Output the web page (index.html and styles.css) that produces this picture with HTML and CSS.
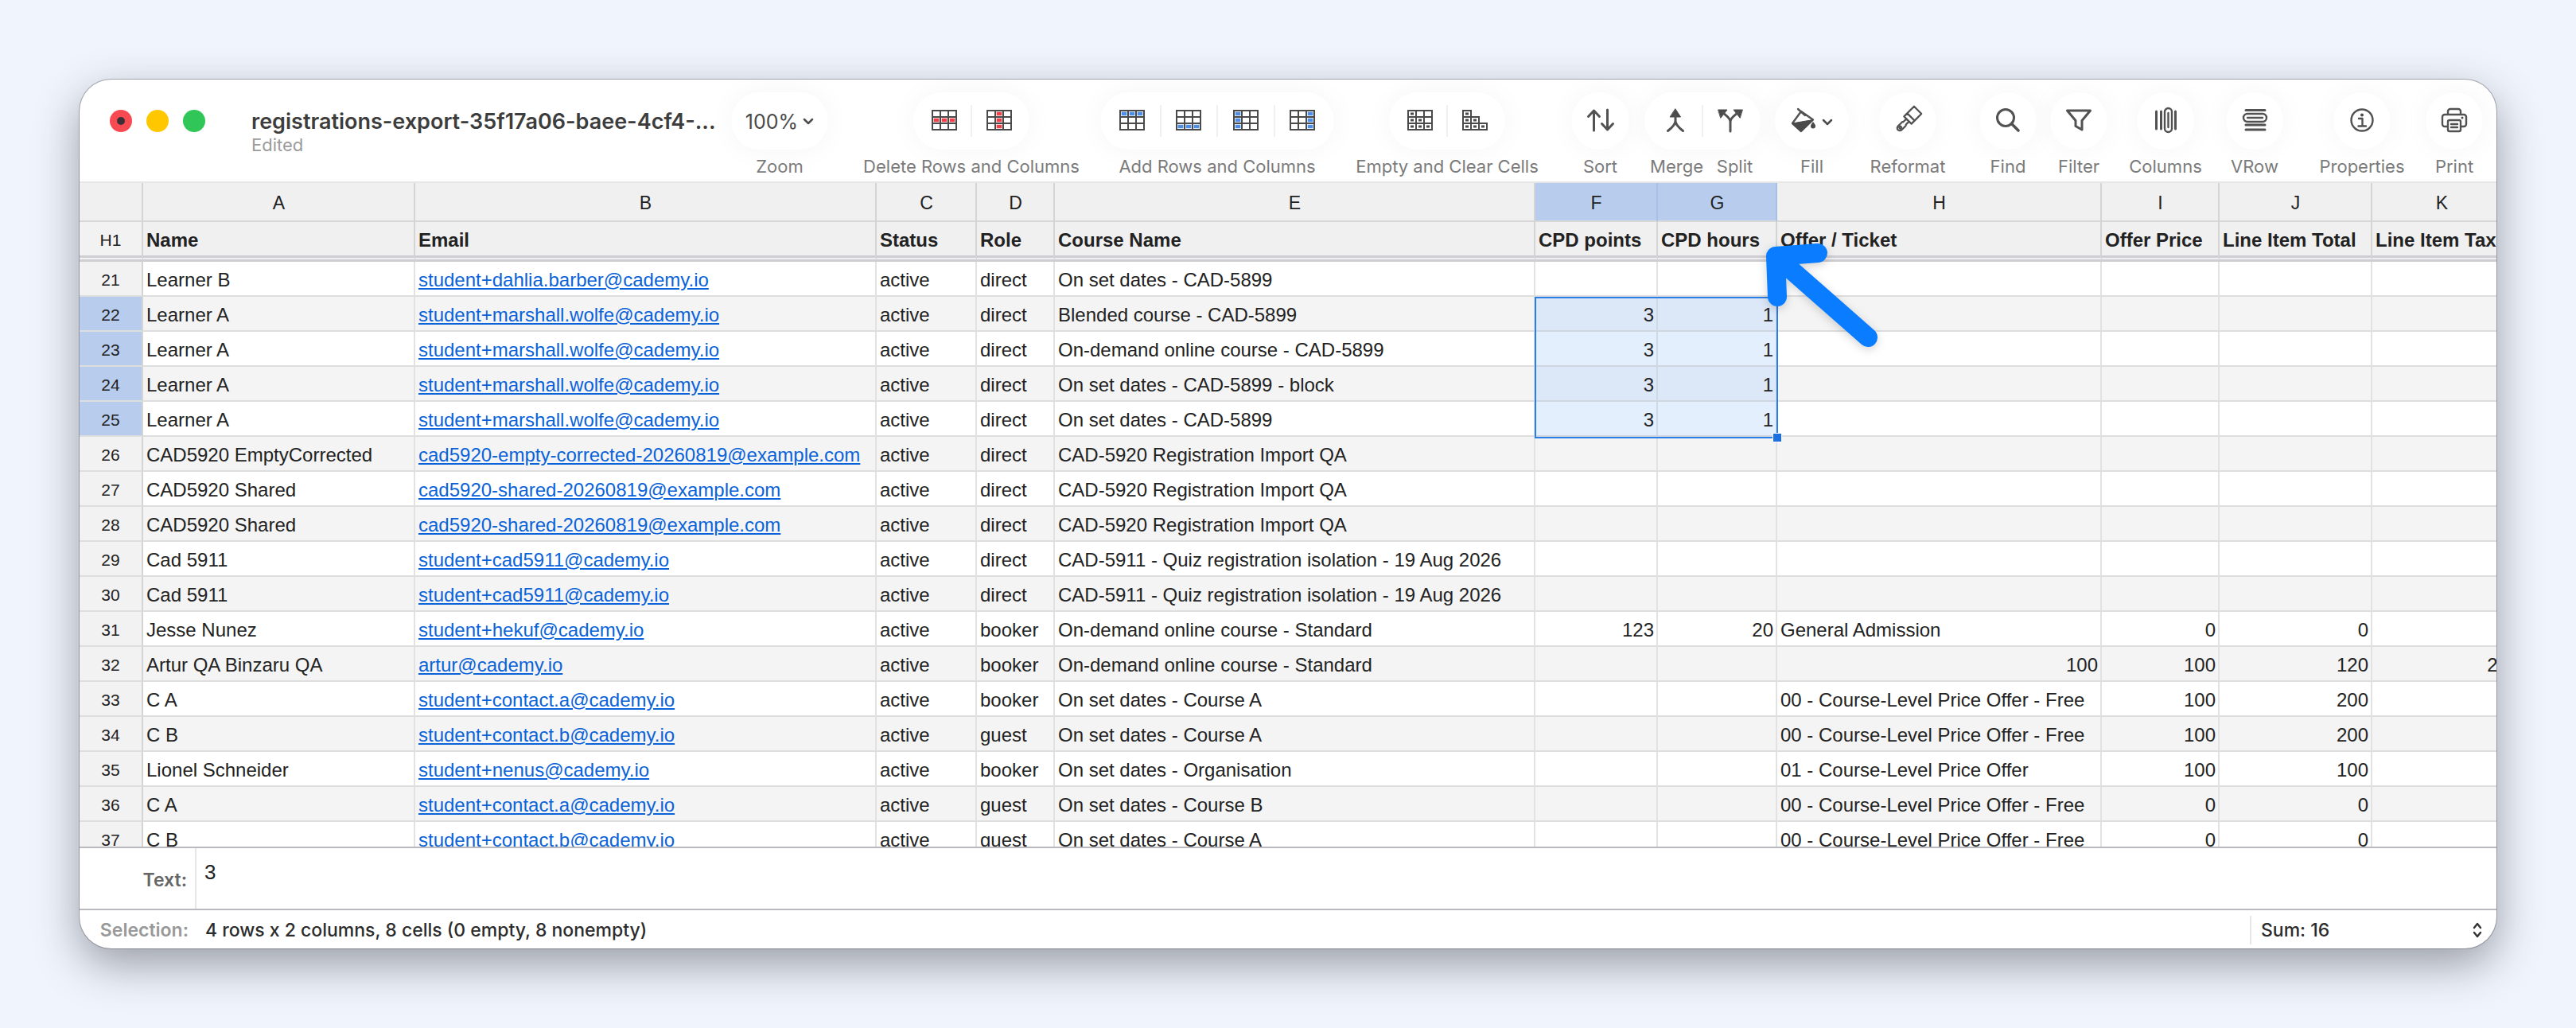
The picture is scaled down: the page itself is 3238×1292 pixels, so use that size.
FILE: index.html
```html
<!DOCTYPE html>
<html lang="en">
<head>
    <meta charset="UTF-8">
    <title>registrations-export</title>
    <link rel="stylesheet" href="styles.css">
</head>
<body>
    <svg class="icon-defs" width="0" height="0">
        <symbol id="grid" viewBox="0 0 32 26">
            <path fill="#4a4a4a" d="M0 0h32v26H0z"/>
            <path fill="#fff" d="M2 2h8v6H2zM12 2h8v6h-8zM22 2h8v6h-8zM2 10h8v6H2zM12 10h8v6h-8zM22 10h8v6h-8zM2 18h8v6H2zM12 18h8v6h-8zM22 18h8v6h-8z"/>
        </symbol>
    </svg>

    <div class="window">
        <header class="toolbar">
            <div class="traffic">
                <span class="light light-red"></span>
                <span class="light light-yellow"></span>
                <span class="light light-green"></span>
            </div>
            <div class="doc-title">
                <div class="doc-name">registrations-export-35f17a06-baee-4cf4-...</div>
                <div class="doc-state">Edited</div>
            </div>

            <div class="tool tool-zoom">
                <div class="pill"><span class="zoom-value">100%</span>
                    <svg class="chev" viewBox="0 0 14 9"><path d="M2 2l5 5 5-5"/></svg>
                </div>
                <span class="tool-label">Zoom</span>
            </div>

            <div class="tool tool-delete">
                <div class="pill">
                    <span class="seg"><svg class="grid-icon" viewBox="0 0 32 26"><use href="#grid"/><path class="red" d="M2.7 10.7h6.6v4.6H2.7zM12.7 10.7h6.6v4.6h-6.6zM22.7 10.7h6.6v4.6h-6.6z"/></svg></span>
                    <span class="sep"></span>
                    <span class="seg"><svg class="grid-icon" viewBox="0 0 32 26"><use href="#grid"/><path class="red" d="M12.7 2.7h6.6v4.6h-6.6zM12.7 10.7h6.6v4.6h-6.6zM12.7 18.7h6.6v4.6h-6.6z"/></svg></span>
                </div>
                <span class="tool-label">Delete Rows and Columns</span>
            </div>

            <div class="tool tool-add">
                <div class="pill">
                    <span class="seg"><svg class="grid-icon" viewBox="0 0 32 26"><use href="#grid"/><path class="blue" d="M2.7 2.7h6.6v4.6H2.7zM12.7 2.7h6.6v4.6h-6.6zM22.7 2.7h6.6v4.6h-6.6z"/></svg></span>
                    <span class="sep"></span>
                    <span class="seg"><svg class="grid-icon" viewBox="0 0 32 26"><use href="#grid"/><path class="blue" d="M2.7 18.7h6.6v4.6H2.7zM12.7 18.7h6.6v4.6h-6.6zM22.7 18.7h6.6v4.6h-6.6z"/></svg></span>
                    <span class="sep"></span>
                    <span class="seg"><svg class="grid-icon" viewBox="0 0 32 26"><use href="#grid"/><path class="blue" d="M2.7 2.7h6.6v4.6H2.7zM2.7 10.7h6.6v4.6H2.7zM2.7 18.7h6.6v4.6H2.7z"/></svg></span>
                    <span class="sep"></span>
                    <span class="seg"><svg class="grid-icon" viewBox="0 0 32 26"><use href="#grid"/><path class="blue" d="M22.7 2.7h6.6v4.6h-6.6zM22.7 10.7h6.6v4.6h-6.6zM22.7 18.7h6.6v4.6h-6.6z"/></svg></span>
                </div>
                <span class="tool-label">Add Rows and Columns</span>
            </div>

            <div class="tool tool-empty">
                <div class="pill">
                    <span class="seg"><svg class="grid-icon" viewBox="0 0 32 26"><use href="#grid"/><path class="dark" d="M4 3.5h4v3H4zM4 11.5h4v3H4zM14 11.5h4v3h-4zM4 19.5h4v3H4zM14 19.5h4v3h-4zM24 19.5h4v3h-4z"/></svg></span>
                    <span class="sep"></span>
                    <span class="seg"><svg class="grid-icon" viewBox="0 0 32 26"><path fill="#4a4a4a" d="M0 0h12v8h10v8h10v10H0z"/><path fill="#fff" d="M2 2h8v6H2zM2 10h8v6H2zM12 10h8v6h-8zM2 18h8v6H2zM12 18h8v6h-8zM22 18h8v6h-8z"/><path class="dark" d="M4 3.5h4v3H4zM4 11.5h4v3H4zM14 11.5h4v3h-4zM4 19.5h4v3H4zM14 19.5h4v3h-4zM24 19.5h4v3h-4z"/></svg></span>
                </div>
                <span class="tool-label">Empty and Clear Cells</span>
            </div>

            <div class="tool tool-sort">
                <div class="pill"><svg class="ico ico-sort" viewBox="0 0 34 28"><path d="M8.500 27V2M1.500 9.500l7-7.500 7 7.500M25.500 1v25M18.500 18.500l7 7.500 7-7.500"/></svg></div>
                <span class="tool-label">Sort</span>
            </div>

            <div class="tool tool-merge">
                <div class="pill">
                    <span class="seg"><svg class="ico ico-merge" viewBox="0 0 22 29"><path class="solid" d="M11 0l6.500 10h-13z"/><path d="M11 8v7c0 5-5 9-9.500 12.500M11 15c0 5 5 9 9.500 12.500"/></svg></span>
                    <span class="sep"></span>
                    <span class="seg"><svg class="ico ico-split" viewBox="0 0 30 28"><path class="solid" d="M0 1h11L3 11zM30 1H19l8 10z"/><path d="M15 28V16c0-5-6-8-10-12M15 16c0-5 6-8 10-12"/></svg></span>
                </div>
                <div class="label-pair"><span class="tool-label">Merge</span><span class="tool-label">Split</span></div>
            </div>

            <div class="tool tool-fill">
                <div class="pill">
                    <svg class="ico ico-bucket" viewBox="0 0 30 30"><path d="M8 1l9 8"/><path d="M12 4l15 10.500L12 29 1 19z"/><path class="solid" d="M1 19l26-4.500L12 29z"/><path class="solid bare" d="M27 17c2 2.500 3 4 3 5.500a3 3 0 0 1-6 0c0-1.500 1-3 3-5.500z"/></svg>
                    <svg class="chev chev-fill" viewBox="0 0 14 9"><path d="M2 2l5 5 5-5"/></svg>
                </div>
                <span class="tool-label">Fill</span>
            </div>

            <div class="tool tool-reformat">
                <div class="pill">
                    <svg class="ico ico-brush" viewBox="0 0 32 34"><g transform="rotate(45 16 17)"><path class="thin" d="M9-2h14v13H9zM9 11h14v6H9zM13.500 17h5v6a2 2 0 0 1 1 2v7a3.500 3.500 0 0 1-7 0v-7a2 2 0 0 1 1-2z"/><circle class="thin" cx="16" cy="31" r="1.500"/></g></svg>
                </div>
                <span class="tool-label">Reformat</span>
            </div>

            <div class="tool tool-find">
                <div class="pill"><svg class="ico ico-find" viewBox="0 0 30 30"><circle cx="12" cy="12" r="10.500"/><path class="heavy" d="M19.500 19.500L28 28"/></svg></div>
                <span class="tool-label">Find</span>
            </div>

            <div class="tool tool-filter">
                <div class="pill"><svg class="ico ico-filter" viewBox="0 0 32 28"><path d="M1.500 2h29L20 14.500V26l-8-4.500v-7z"/></svg></div>
                <span class="tool-label">Filter</span>
            </div>

            <div class="tool tool-columns">
                <div class="pill"><svg class="ico ico-columns" viewBox="0 0 27 32"><path d="M1.500 5v22M7.500 5v22M25.500 5v22"/><rect class="thin" x="12" y="1" width="9" height="30" rx="4.500"/><path class="thin" d="M16.500 7v18"/></svg></div>
                <span class="tool-label">Columns</span>
            </div>

            <div class="tool tool-vrow">
                <div class="pill"><svg class="ico ico-vrow" viewBox="0 0 31 28"><path d="M4 1.500h24M4 20h24M4 26h24"/><rect class="thin" x="1" y="6" width="29" height="10" rx="5"/><path class="thin" d="M6 11h19"/></svg></div>
                <span class="tool-label">VRow</span>
            </div>

            <div class="tool tool-properties">
                <div class="pill"><svg class="ico ico-info" viewBox="0 0 30 30"><circle class="thin" cx="15" cy="15" r="13.500"/><circle class="solid bare" cx="15" cy="8.500" r="2"/><path class="thin" d="M11 13h4.500v9M10.500 22.500h9.500"/></svg></div>
                <span class="tool-label">Properties</span>
            </div>

            <div class="tool tool-print">
                <div class="pill"><svg class="ico ico-print" viewBox="0 0 32 30"><path class="thin" d="M8 8V4a3 3 0 0 1 3-3h10a3 3 0 0 1 3 3v4M7 23H4a3 3 0 0 1-3-3v-9a3 3 0 0 1 3-3h24a3 3 0 0 1 3 3v9a3 3 0 0 1-3 3h-3"/><rect class="thin" x="8" y="15" width="16" height="14" rx="2"/><path class="thin" d="M12 20h8M12 24h8"/><circle class="solid bare" cx="26" cy="12" r="1.500"/></svg></div>
                <span class="tool-label">Print</span>
            </div>
        </header>

        <div class="sheet">
            <table class="grid">
                <colgroup>
                    <col class="col-gutter"><col class="col-a"><col class="col-b"><col class="col-c"><col class="col-d"><col class="col-e"><col class="col-f"><col class="col-g"><col class="col-h"><col class="col-i"><col class="col-j"><col class="col-k">
                </colgroup>
                <thead>
                    <tr class="letters">
                        <th></th><th>A</th><th>B</th><th>C</th><th>D</th><th>E</th><th class="hot">F</th><th class="hot">G</th><th>H</th><th>I</th><th>J</th><th>K</th>
                    </tr>
                    <tr class="names">
                        <th class="num">H1</th><th>Name</th><th>Email</th><th>Status</th><th>Role</th><th>Course Name</th><th>CPD points</th><th>CPD hours</th><th>Offer / Ticket</th><th>Offer Price</th><th>Line Item Total</th><th>Line Item Tax</th>
                    </tr>
                </thead>
                <tbody>
                    <tr><th class="num">21</th><td>Learner B</td><td><a href="#">student+dahlia.barber@cademy.io</a></td><td>active</td><td>direct</td><td>On set dates - CAD-5899</td><td></td><td></td><td></td><td></td><td></td><td></td></tr>
                    <tr class="picked"><th class="num">22</th><td>Learner A</td><td><a href="#">student+marshall.wolfe@cademy.io</a></td><td>active</td><td>direct</td><td>Blended course - CAD-5899</td><td class="sel r">3</td><td class="sel r">1</td><td></td><td></td><td></td><td></td></tr>
                    <tr class="picked"><th class="num">23</th><td>Learner A</td><td><a href="#">student+marshall.wolfe@cademy.io</a></td><td>active</td><td>direct</td><td>On-demand online course - CAD-5899</td><td class="sel r">3</td><td class="sel r">1</td><td></td><td></td><td></td><td></td></tr>
                    <tr class="picked"><th class="num">24</th><td>Learner A</td><td><a href="#">student+marshall.wolfe@cademy.io</a></td><td>active</td><td>direct</td><td>On set dates - CAD-5899 - block</td><td class="sel r">3</td><td class="sel r">1</td><td></td><td></td><td></td><td></td></tr>
                    <tr class="picked"><th class="num">25</th><td>Learner A</td><td><a href="#">student+marshall.wolfe@cademy.io</a></td><td>active</td><td>direct</td><td>On set dates - CAD-5899</td><td class="sel r">3</td><td class="sel r">1</td><td></td><td></td><td></td><td></td></tr>
                    <tr><th class="num">26</th><td>CAD5920 EmptyCorrected</td><td><a href="#">cad5920-empty-corrected-20260819@example.com</a></td><td>active</td><td>direct</td><td>CAD-5920 Registration Import QA</td><td></td><td></td><td></td><td></td><td></td><td></td></tr>
                    <tr><th class="num">27</th><td>CAD5920 Shared</td><td><a href="#">cad5920-shared-20260819@example.com</a></td><td>active</td><td>direct</td><td>CAD-5920 Registration Import QA</td><td></td><td></td><td></td><td></td><td></td><td></td></tr>
                    <tr><th class="num">28</th><td>CAD5920 Shared</td><td><a href="#">cad5920-shared-20260819@example.com</a></td><td>active</td><td>direct</td><td>CAD-5920 Registration Import QA</td><td></td><td></td><td></td><td></td><td></td><td></td></tr>
                    <tr><th class="num">29</th><td>Cad 5911</td><td><a href="#">student+cad5911@cademy.io</a></td><td>active</td><td>direct</td><td>CAD-5911 - Quiz registration isolation - 19 Aug 2026</td><td></td><td></td><td></td><td></td><td></td><td></td></tr>
                    <tr><th class="num">30</th><td>Cad 5911</td><td><a href="#">student+cad5911@cademy.io</a></td><td>active</td><td>direct</td><td>CAD-5911 - Quiz registration isolation - 19 Aug 2026</td><td></td><td></td><td></td><td></td><td></td><td></td></tr>
                    <tr><th class="num">31</th><td>Jesse Nunez</td><td><a href="#">student+hekuf@cademy.io</a></td><td>active</td><td>booker</td><td>On-demand online course - Standard</td><td class="r">123</td><td class="r">20</td><td>General Admission</td><td class="r">0</td><td class="r">0</td><td></td></tr>
                    <tr><th class="num">32</th><td>Artur QA Binzaru QA</td><td><a href="#">artur@cademy.io</a></td><td>active</td><td>booker</td><td>On-demand online course - Standard</td><td></td><td></td><td class="r">100</td><td class="r">100</td><td class="r">120</td><td class="r">20</td></tr>
                    <tr><th class="num">33</th><td>C A</td><td><a href="#">student+contact.a@cademy.io</a></td><td>active</td><td>booker</td><td>On set dates - Course A</td><td></td><td></td><td>00 - Course-Level Price Offer - Free</td><td class="r">100</td><td class="r">200</td><td></td></tr>
                    <tr><th class="num">34</th><td>C B</td><td><a href="#">student+contact.b@cademy.io</a></td><td>active</td><td>guest</td><td>On set dates - Course A</td><td></td><td></td><td>00 - Course-Level Price Offer - Free</td><td class="r">100</td><td class="r">200</td><td></td></tr>
                    <tr><th class="num">35</th><td>Lionel Schneider</td><td><a href="#">student+nenus@cademy.io</a></td><td>active</td><td>booker</td><td>On set dates - Organisation</td><td></td><td></td><td>01 - Course-Level Price Offer</td><td class="r">100</td><td class="r">100</td><td></td></tr>
                    <tr><th class="num">36</th><td>C A</td><td><a href="#">student+contact.a@cademy.io</a></td><td>active</td><td>guest</td><td>On set dates - Course B</td><td></td><td></td><td>00 - Course-Level Price Offer - Free</td><td class="r">0</td><td class="r">0</td><td></td></tr>
                    <tr><th class="num">37</th><td>C B</td><td><a href="#">student+contact.b@cademy.io</a></td><td>active</td><td>guest</td><td>On set dates - Course A</td><td></td><td></td><td>00 - Course-Level Price Offer - Free</td><td class="r">0</td><td class="r">0</td><td></td></tr>
                </tbody>
            </table>
            <div class="selection"><span class="handle"></span></div>
        </div>

        <div class="text-panel">
            <div class="panel-label">Text:</div>
            <div class="panel-value">3</div>
        </div>

        <footer class="statusbar">
            <div class="status-label">Selection:</div>
            <div class="status-value">4 rows x 2 columns, 8 cells (0 empty, 8 nonempty)</div>
            <div class="status-sum">
                <span>Sum: 16</span>
                <svg class="stepper" viewBox="0 0 12 22"><path d="M2 8l4-5 4 5M2 14l4 5 4-5"/></svg>
            </div>
        </footer>

        <!-- annotation arrow pasted on top of the screenshot -->
        <svg class="arrow" viewBox="0 0 160 140"><path d="M14 65L12 14l53-4M12 14l116 102"/></svg>
    </div>
</body>
</html>
```

FILE: styles.css
```css
* {
    box-sizing: border-box;
}

body {
    margin: 0;
    width: 3238px;
    height: 1292px;
    padding: 100px;
    background: #f0f5fd;
    font-family: 'Liberation Sans', Arial, sans-serif;
    overflow: hidden;
}

.icon-defs {
    position: absolute;
}

.window {
    position: relative;
    display: flex;
    flex-direction: column;
    width: 3038px;
    height: 1092px;
    background: #fff;
    border-radius: 40px;
    overflow: hidden;
    box-shadow: 0 0 0 1px rgba(90, 90, 100, 0.45), 0 20px 56px rgba(30, 30, 45, 0.42);
}

/* Toolbar */
.toolbar {
    display: flex;
    flex: none;
    height: 130px;
    padding: 16px 0 0 38px;
    font-family: Inter, 'Noto Sans', sans-serif;
    border-bottom: 2px solid #e6e6e6;
}

.traffic {
    display: flex;
    flex: none;
    gap: 18px;
    margin-top: 22px;
}

.light {
    position: relative;
    width: 28px;
    height: 28px;
    border-radius: 50%;
}

.light-red {
    background: #f84a52;
}

.light-red::after {
    content: '';
    position: absolute;
    top: 9px;
    left: 9px;
    width: 10px;
    height: 10px;
    border-radius: 50%;
    background: #3a3036;
}

.light-yellow {
    background: #fec700;
}

.light-green {
    background: #30c758;
}

.doc-title {
    flex: none;
    width: 603px;
    margin-left: 58px;
    padding-top: 21px;
}

.doc-name {
    font-size: 27px;
    line-height: 32px;
    font-weight: 600;
    color: #3d3d3d;
    white-space: nowrap;
}

.doc-state {
    font-size: 22px;
    line-height: 26px;
    color: #9b9b9b;
}

.tool {
    display: flex;
    flex: none;
    flex-direction: column;
    align-items: center;
}

.pill {
    display: flex;
    align-items: center;
    justify-content: center;
    height: 72px;
    width: 72px;
    background: #fff;
    border-radius: 36px;
    box-shadow: 0 0 36px rgba(0, 0, 0, 0.045);
}

.seg {
    display: flex;
    flex: 1;
    align-items: center;
    justify-content: center;
}

/* outer icons sit a little in from the rounded ends */
.seg:first-child {
    padding-left: 5px;
}

.seg:last-child {
    padding-right: 5px;
}

.sep {
    flex: none;
    width: 2px;
    height: 40px;
    background: #f0f0f0;
}

/* zero width so a long label spills past its pill without widening the tool */
.tool-label {
    display: flex;
    justify-content: center;
    width: 0;
    margin-top: 8px;
    font-size: 22px;
    line-height: 26px;
    color: #7b7b7b;
    white-space: nowrap;
}

.label-pair {
    display: flex;
    gap: 73px;
    padding-left: 8px;
}

.tool-zoom .pill { width: 122px; gap: 6px; }
.tool-delete { margin-left: 107px; }
.tool-delete .pill { width: 146px; }
.tool-add { margin-left: 89px; }
.tool-add .pill { width: 294px; }
.tool-empty { margin-left: 69px; }
.tool-empty .pill { width: 146px; }
.tool-sort { margin-left: 83px; }
.tool-sort .pill { width: 73px; }
.tool-merge { margin-left: 19px; }
.tool-merge .pill { width: 146px; }
.tool-fill { margin-left: 18px; }
.tool-fill .pill { width: 93px; gap: 8px; }
.tool-reformat { margin-left: 38px; }
.tool-find { margin-left: 54px; }
.tool-filter { margin-left: 17px; }
.tool-columns { margin-left: 37px; }
.tool-vrow { margin-left: 40px; }
.tool-properties { margin-left: 63px; }
.tool-print { margin-left: 44px; }

.zoom-value {
    padding-top: 2px;
    font-size: 25px;
    color: #4a4a4a;
}

.chev {
    width: 14px;
    height: 9px;
    fill: none;
    stroke: #4d4d4d;
    stroke-width: 2.5;
    stroke-linecap: round;
    stroke-linejoin: round;
}

.chev-fill {
    margin-top: 2px;
}

.grid-icon {
    display: block;
    width: 32px;
    height: 26px;
    margin-top: -2px;
}

.red { fill: #f0404a; }
.blue { fill: #4d8fe8; }
.dark { fill: #4a4a4a; }

.ico {
    display: block;
    fill: none;
    stroke: #525252;
    stroke-width: 3;
    stroke-linecap: round;
    stroke-linejoin: round;
    overflow: visible;
    margin-top: -2px;
}

.ico .thin { stroke-width: 2.4; }
.ico .heavy { stroke-width: 3.6; }
.ico .solid { fill: #4a4a4a; stroke: #4a4a4a; stroke-width: 1; }
.ico .bare { stroke: none; }

.ico-sort { width: 34px; height: 28px; }
.ico-merge { width: 22px; height: 29px; }
.ico-split { width: 30px; height: 28px; }
.ico-bucket { width: 30px; height: 30px; stroke-width: 2.4; }
.ico-brush { width: 30px; height: 32px; }
.ico-find { width: 30px; height: 30px; }
.ico-filter { width: 32px; height: 28px; }
.ico-columns { width: 27px; height: 32px; }
.ico-vrow { width: 31px; height: 28px; }
.ico-info { width: 30px; height: 30px; }
.ico-print { width: 32px; height: 30px; }

/* Sheet */
.sheet {
    position: relative;
    flex: 1;
    min-height: 0;
    overflow: hidden;
    background: #fff;
}

.grid {
    width: 3058px;
    table-layout: fixed;
    border-collapse: separate;
    border-spacing: 0;
    font-size: 24px;
    color: #222;
}

.col-gutter { width: 80px; }
.col-a { width: 342px; }
.col-b { width: 580px; }
.col-c { width: 126px; }
.col-d { width: 98px; }
.col-e { width: 604px; }
.col-f { width: 154px; }
.col-g { width: 150px; }
.col-h { width: 408px; }
.col-i { width: 148px; }
.col-j { width: 192px; }
.col-k { width: 176px; }

.grid th,
.grid td {
    height: 44px;
    padding: 3px 3px 0 4px;
    border-right: 2px solid #e2e2e2;
    border-bottom: 2px solid #dedede;
    white-space: nowrap;
    overflow: hidden;
    text-align: left;
}

.letters th {
    height: 49px;
    text-align: center;
    font-weight: 400;
    font-size: 23px;
    background: #f0f0f0;
    border-bottom-color: #d8d8d8;
    border-right-color: #d4d4d4;
}

.letters .hot {
    background: #b8cdee;
    border-right-color: #a9c0e6;
}

.names th {
    height: 50px;
    padding-top: 4px;
    font-weight: 700;
    background: #f0f0f0;
    border-right-color: #d4d4d4;
    border-bottom: 8px double #cfcfd3;
}

.grid th.num {
    padding: 3px 0 0;
    text-align: center;
    font-weight: 400;
    font-size: 21px;
    background: #f2f2f2;
    border-right-color: #d4d4d4;
}

tbody tr:nth-child(even) td {
    background: #f4f4f4;
}

.grid .r {
    text-align: right;
}

.grid a {
    color: #0a63d8;
}

.grid .picked th.num {
    background: #b8cdee;
}

.grid tbody td.sel {
    background: #e3effd;
    border-bottom-color: #cfd6e0;
    border-right-color: #d0d8e4;
}

.grid tbody tr:nth-child(even) td.sel {
    background: #dce8f7;
}

.selection {
    position: absolute;
    top: 143px;
    left: 1829px;
    width: 306px;
    height: 178px;
    border: 2px solid #2a7ee8;
}

.handle {
    position: absolute;
    right: -7px;
    bottom: -7px;
    width: 12px;
    height: 12px;
    background: #1b6fe0;
    border: 1px solid #fff;
}

/* Bottom panels */
.text-panel {
    display: flex;
    flex: none;
    height: 78px;
    border-top: 2px solid #b9b9bf;
    font-family: Inter, 'Noto Sans', sans-serif;
}

.panel-label {
    width: 147px;
    padding: 27px 10px 0 0;
    text-align: right;
    font-size: 23px;
    line-height: 26px;
    font-weight: 600;
    color: #666;
    border-right: 2px solid #e6e6e6;
}

.panel-value {
    padding: 15px 0 0 10px;
    font-family: 'Liberation Sans', Arial, sans-serif;
    font-size: 26px;
    line-height: 30px;
    color: #222;
}

.statusbar {
    display: flex;
    flex: none;
    align-items: center;
    height: 50px;
    padding-top: 2px;
    border-top: 2px solid #b9b9bf;
    font-family: Inter, 'Noto Sans', sans-serif;
    font-size: 23px;
    font-weight: 500;
}

.status-label {
    width: 137px;
    text-align: right;
    font-weight: 600;
    color: #999;
}

.status-value {
    flex: 1;
    padding-left: 21px;
    color: #2c2c2c;
}

.status-sum {
    display: flex;
    align-items: center;
    justify-content: space-between;
    width: 310px;
    height: 36px;
    padding: 0 18px 0 12px;
    border-left: 2px solid #e6e6e6;
    color: #2c2c2c;
}

.stepper {
    width: 12px;
    height: 22px;
    fill: none;
    stroke: #333;
    stroke-width: 2.4;
    stroke-linecap: round;
    stroke-linejoin: round;
}

.arrow {
    position: absolute;
    top: 208px;
    left: 2120px;
    width: 160px;
    height: 140px;
    fill: none;
    stroke: #0a7cff;
    stroke-width: 24;
    stroke-linecap: round;
    stroke-linejoin: round;
    overflow: visible;
    filter: drop-shadow(0 3px 6px rgba(0, 0, 0, 0.18));
}
```
